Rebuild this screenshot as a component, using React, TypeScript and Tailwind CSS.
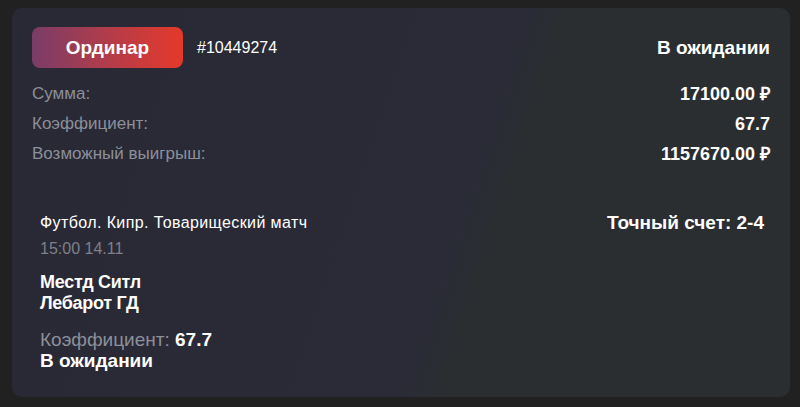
export default function App() {
  const font = { fontFamily: '"Liberation Sans", Arial, sans-serif' };
  return (
    <div className="w-[800px] h-[407px] bg-[#212121] pl-[12px] pt-[8px]" style={font}>
      <div className="w-[778px] h-[389px] rounded-[10px] bg-[linear-gradient(108deg,#282935_0%,#2a2b37_57%,#2a2e31_61%,#2a2e31_100%)] px-5 pt-[19px] text-white">
        <div className="flex items-center justify-between h-[41px]">
          <div className="flex items-center">
            <div className="w-[151px] h-[41px] rounded-[8px] bg-[linear-gradient(90deg,#7a3c68_0%,#b23c4a_50%,#e5392b_100%)] flex items-center justify-center text-[19px] font-bold leading-none">
              Ординар
            </div>
            <div className="ml-[14px] text-[16px] leading-none">#10449274</div>
          </div>
          <div className="text-[19px] font-bold leading-none">В ожидании</div>
        </div>

        <div className="mt-[11px]">
          <div className="flex items-center justify-between h-[30px]">
            <span className="text-[17px] text-[#8d8f99]">Сумма:</span>
            <span className="text-[18px] font-bold">17100.00 ₽</span>
          </div>
          <div className="flex items-center justify-between h-[30px]">
            <span className="text-[17px] text-[#8d8f99]">Коэффициент:</span>
            <span className="text-[18px] font-bold">67.7</span>
          </div>
          <div className="flex items-center justify-between h-[30px]">
            <span className="text-[17px] text-[#8d8f99]">Возможный выигрыш:</span>
            <span className="text-[18px] font-bold">1157670.00 ₽</span>
          </div>
        </div>

        <div className="mt-[44px] pl-2 pr-[6px]">
          <div className="flex items-center justify-between h-[20px]">
            <span className="text-[16px] tracking-[0.4px]">Футбол. Кипр. Товарищеский матч</span>
            <span className="text-[19px] font-bold">Точный счет: 2-4</span>
          </div>
          <div className="mt-[6px] h-[20px] flex items-center text-[16px] text-[#7e808a]">15:00 14.11</div>
          <div className="mt-[13px] text-[18px] font-bold leading-[21px] tracking-[-0.3px]">
            <div>Местд Ситл</div>
            <div>Лебарот ГД</div>
          </div>
          <div className="mt-[15px] text-[19px] leading-[21px]">
            <div>
              <span className="text-[#8d8f99]">Коэффициент: </span>
              <span className="font-bold">67.7</span>
            </div>
            <div className="font-bold">В ожидании</div>
          </div>
        </div>
      </div>
    </div>
  );
}
